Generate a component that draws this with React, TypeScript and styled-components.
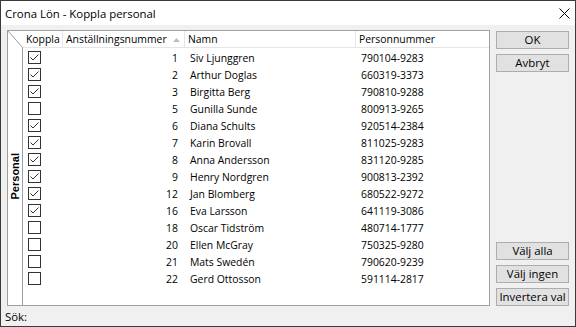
import React from 'react';
import styled, { createGlobalStyle } from 'styled-components';

type Person = {
	selected: boolean;
	nr: number;
	name: string;
	pnr: string;
};

const people: Person[] = [
	{ selected: true, nr: 1, name: 'Siv Ljunggren', pnr: '790104-9283' },
	{ selected: true, nr: 2, name: 'Arthur Doglas', pnr: '660319-3373' },
	{ selected: true, nr: 3, name: 'Birgitta Berg', pnr: '790810-9288' },
	{ selected: false, nr: 5, name: 'Gunilla Sunde', pnr: '800913-9265' },
	{ selected: true, nr: 6, name: 'Diana Schults', pnr: '920514-2384' },
	{ selected: true, nr: 7, name: 'Karin Brovall', pnr: '811025-9283' },
	{ selected: true, nr: 8, name: 'Anna Andersson', pnr: '831120-9285' },
	{ selected: true, nr: 9, name: 'Henry Nordgren', pnr: '900813-2392' },
	{ selected: true, nr: 12, name: 'Jan Blomberg', pnr: '680522-9272' },
	{ selected: true, nr: 16, name: 'Eva Larsson', pnr: '641119-3086' },
	{ selected: false, nr: 18, name: 'Oscar Tidström', pnr: '480714-1777' },
	{ selected: false, nr: 20, name: 'Ellen McGray', pnr: '750325-9280' },
	{ selected: false, nr: 21, name: 'Mats Swedén', pnr: '790620-9239' },
	{ selected: false, nr: 22, name: 'Gerd Ottosson', pnr: '591114-2817' },
];

const GlobalStyle = createGlobalStyle`
	html, body {
		margin: 0;
		padding: 0;
		background: #f0f0f0;
	}
	* {
		box-sizing: border-box;
	}
`;

const Checkbox = ({ checked }: { checked: boolean }) => (
	<svg width="13" height="13" viewBox="0 0 13 13">
		<rect x="0.5" y="0.5" width="12" height="12" fill="#fff" stroke="#333" />
		{checked && (
			<path d="M2.5 6.5 L5 9 L10.5 3.5" fill="none" stroke="#333" strokeWidth="1" />
		)}
	</svg>
);

const App = () => {
	return (
		<>
			<GlobalStyle />
			<Window>
				<TitleBar>
					<Title>Crona Lön - Koppla personal</Title>
					<CloseIcon width="11" height="11" viewBox="0 0 11 11">
						<path d="M0.5 0.5 L10.5 10.5 M10.5 0.5 L0.5 10.5" stroke="#000" strokeWidth="1" />
					</CloseIcon>
				</TitleBar>
				<Body>
					<GridFrame>
						<HeaderRow>
							<Corner>
								<svg width="15" height="17" viewBox="0 0 15 17">
									<path d="M0 0 L15 17" stroke="#a0a0a0" strokeWidth="1" />
								</svg>
							</Corner>
							<HeaderCell $width={40}>Koppla</HeaderCell>
							<HeaderCell $width={122}>
								Anställningsnummer
								<SortArrow width="7" height="4" viewBox="0 0 7 4">
									<path d="M0 4 L3.5 0 L7 4 Z" fill="#bcbcbc" />
								</SortArrow>
							</HeaderCell>
							<HeaderCell $width={171}>Namn</HeaderCell>
							<HeaderCell $last>Personnummer</HeaderCell>
						</HeaderRow>
						<GridBody>
							<SideLabel>
								<SideText>Personal</SideText>
							</SideLabel>
							<Rows>
								{people.map((p) => (
									<Row key={p.nr}>
										<CheckCell>
											<Checkbox checked={p.selected} />
										</CheckCell>
										<NumberCell>{p.nr}</NumberCell>
										<TextCell $width={171}>{p.name}</TextCell>
										<TextCell>{p.pnr}</TextCell>
									</Row>
								))}
							</Rows>
						</GridBody>
					</GridFrame>
					<ButtonColumn>
						<ButtonGroup>
							<Button>OK</Button>
							<Button>Avbryt</Button>
						</ButtonGroup>
						<ButtonGroup>
							<Button>Välj alla</Button>
							<Button>Välj ingen</Button>
							<Button>Invertera val</Button>
						</ButtonGroup>
					</ButtonColumn>
				</Body>
				<StatusBar>Sök:</StatusBar>
			</Window>
		</>
	);
};

export default App;

const Window = styled.div`
	width: 576px;
	height: 327px;
	border: 1px solid #3a3a3a;
	background: #f0f0f0;
	display: flex;
	flex-direction: column;
	font-family: 'Open Sans', 'Noto Sans', sans-serif;
	color: #000;
`;

const TitleBar = styled.div`
	height: 24px;
	background: #fff;
	display: flex;
	align-items: center;
	justify-content: space-between;
	padding: 0 5px 0 4px;
	flex-shrink: 0;
`;

const Title = styled.span`
	font-size: 11.4px;
`;

const CloseIcon = styled.svg`
	margin-right: 0;
`;

const Body = styled.div`
	display: flex;
	padding: 5px 5px 0 6px;
	flex: 1;
	min-height: 0;
`;

const GridFrame = styled.div`
	width: 483px;
	border: 1px solid #a0a0a0;
	background: #fff;
	display: flex;
	flex-direction: column;
`;

const HeaderRow = styled.div`
	display: flex;
	height: 17px;
	flex-shrink: 0;
	font-size: 10.4px;
`;

const Corner = styled.div`
	width: 15px;
	height: 17px;
	line-height: 0;
`;

const HeaderCell = styled.div<{ $width?: number; $last?: boolean }>`
	${({ $width }) => ($width ? `width: ${$width}px;` : 'flex: 1;')}
	border-right: ${({ $last }) => ($last ? 'none' : '1px solid #e5e5e5')};
	border-bottom: 1px solid #e5e5e5;
	padding-left: 3px;
	display: flex;
	align-items: center;
	position: relative;
	white-space: nowrap;
`;

const SortArrow = styled.svg`
	position: absolute;
	right: 4px;
	top: 7px;
`;

const GridBody = styled.div`
	display: flex;
	flex: 1;
`;

const SideLabel = styled.div`
	width: 15px;
	border-right: 1px solid #a0a0a0;
	display: flex;
	align-items: center;
	justify-content: center;
`;

const SideText = styled.span`
	writing-mode: vertical-rl;
	transform: rotate(180deg);
	font-family: 'Liberation Sans', Arial, sans-serif;
	font-weight: bold;
	font-size: 11px;
`;

const Rows = styled.div`
	flex: 1;
	padding-top: 1px;
	font-size: 10.4px;
`;

const Row = styled.div`
	display: flex;
	height: 17px;
	align-items: center;
`;

const CheckCell = styled.div`
	width: 40px;
	padding-left: 5px;
	display: flex;
	align-items: center;
`;

const NumberCell = styled.div`
	width: 122px;
	text-align: right;
	padding-right: 7px;
`;

const TextCell = styled.div<{ $width?: number }>`
	${({ $width }) => ($width ? `width: ${$width}px;` : 'flex: 1;')}
	padding-left: 5px;
	white-space: nowrap;
`;

const ButtonColumn = styled.div`
	display: flex;
	flex-direction: column;
	justify-content: space-between;
	margin-left: 6px;
	padding: 1px 0 0;
	width: 73px;
`;

const ButtonGroup = styled.div`
	display: flex;
	flex-direction: column;
	gap: 5px;
`;

const Button = styled.button`
	height: 18px;
	width: 73px;
	padding: 0;
	background: #e1e1e1;
	border: 1px solid #adadad;
	font-family: 'Open Sans', 'Noto Sans', sans-serif;
	font-size: 11.4px;
	color: #000;
	line-height: 14px;
`;

const StatusBar = styled.div`
	height: 20px;
	flex-shrink: 0;
	display: flex;
	align-items: center;
	padding-left: 4px;
	font-size: 11.4px;
`;
